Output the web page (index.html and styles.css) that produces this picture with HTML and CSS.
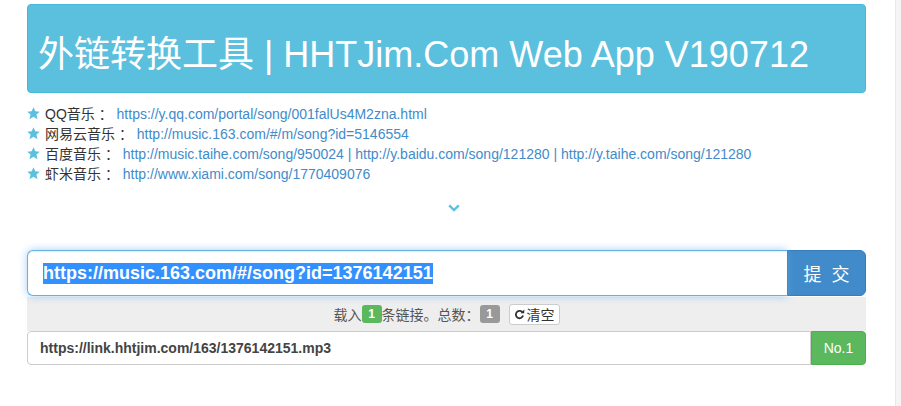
FILE: index.html
```html
<!DOCTYPE html>
<html lang="zh-CN">
<head>
<meta charset="utf-8">
<title>外链转换工具</title>
<link rel="stylesheet" href="styles.css">
</head>
<body>
<div class="page">
  <div class="header">
    <h1 class="title">外链转换工具 | HHTJim.Com Web App V190712</h1>
  </div>
  <ul class="sources">
    <li><svg class="star" viewBox="0 0 12 12"><path d="M6 0.2 7.7 4 11.8 4.3 8.7 7 9.7 11.2 6 9 2.3 11.2 3.3 7 0.2 4.3 4.3 4Z"/></svg>QQ音乐 ： <a href="#">https://y.qq.com/portal/song/001falUs4M2zna.html</a></li>
    <li><svg class="star" viewBox="0 0 12 12"><path d="M6 0.2 7.7 4 11.8 4.3 8.7 7 9.7 11.2 6 9 2.3 11.2 3.3 7 0.2 4.3 4.3 4Z"/></svg>网易云音乐 ： <a href="#">http://music.163.com/#/m/song?id=5146554</a></li>
    <li><svg class="star" viewBox="0 0 12 12"><path d="M6 0.2 7.7 4 11.8 4.3 8.7 7 9.7 11.2 6 9 2.3 11.2 3.3 7 0.2 4.3 4.3 4Z"/></svg>百度音乐 ： <a href="#">http://music.taihe.com/song/950024</a> <span class="sep">|</span> <a href="#">http://y.baidu.com/song/121280</a> <span class="sep">|</span> <a href="#">http://y.taihe.com/song/121280</a></li>
    <li><svg class="star" viewBox="0 0 12 12"><path d="M6 0.2 7.7 4 11.8 4.3 8.7 7 9.7 11.2 6 9 2.3 11.2 3.3 7 0.2 4.3 4.3 4Z"/></svg>虾米音乐 ： <a href="#">http://www.xiami.com/song/1770409076</a></li>
  </ul>
  <div class="more">
    <svg class="chev" viewBox="0 0 12 8"><path d="M1.2 1.4 6 6 10.8 1.4" fill="none" stroke="#5bc0de" stroke-width="2.4"/></svg>
  </div>
  <div class="input-group">
    <div class="url-input"><span class="sel">https://music.163.com/#/song?id=1376142151</span></div>
    <button class="submit">提 交</button>
  </div>
  <div class="status">
    <span>载入</span><span class="badge green">1</span><span>条链接。总数：</span><span class="badge gray">1</span>
    <button class="clear"><svg class="refresh" viewBox="0 0 12 12"><path d="M9.6 4.2A4 4 0 1 0 9.9 7.2" fill="none" stroke="#333" stroke-width="2"/><path d="M7.2 4.6 11.2 4.6 11.2 0.6Z" fill="#333"/></svg>清空</button>
  </div>
  <div class="result">
    <div class="result-input">https://link.hhtjim.com/163/1376142151.mp3</div>
    <button class="no">No.1</button>
  </div>
</div>
<div class="scrollbar"></div>
</body>
</html>
```

FILE: styles.css
```css
html, body {
  margin: 0;
  padding: 0;
  background: #fff;
}
body {
  font-family: "Liberation Sans", Arial, "Noto Sans CJK SC", sans-serif;
  font-size: 14px;
  color: #333;
}
.page {
  width: 839px;
  margin-left: 27px;
  padding-top: 4px;
}
.header {
  background: #5bc0de;
  border: 1px solid #46b8da;
  border-radius: 4px;
  height: 87px;
  display: flex;
  align-items: center;
}
.title {
  margin: 0 0 0 10px;
  color: #fff;
  font-weight: normal;
  font-size: 36px;
  line-height: 40px;
  padding-top: 12px;
  font-family: "Liberation Sans", Arial, "Noto Sans CJK SC", sans-serif;
}
.sources {
  list-style: none;
  margin: 11px 0 0 0;
  padding: 0;
}
.sources li {
  display: block;
  height: 20px;
  line-height: 20px;
  white-space: pre;
}
.star {
  display: inline-block;
  width: 13px;
  height: 13px;
  fill: #5bc0de;
  margin-right: 5px;
  vertical-align: -1px;
}
.sources a {
  color: #428bca;
  text-decoration: none;
}
.sep { color: #428bca; }
.more {
  height: 44px;
  display: flex;
  justify-content: center;
  padding-top: 20px;
  box-sizing: border-box;
}
.chev {
  width: 12px;
  height: 8px;
  margin-left: 15px;
}
.input-group {
  margin-top: 22px;
  display: flex;
  height: 46px;
}
.url-input {
  flex: 1;
  border: 1px solid #66afe9;
  border-right: none;
  border-radius: 6px 0 0 6px;
  box-shadow: inset 0 1px 1px rgba(0,0,0,.075), 0 0 8px rgba(102,175,233,.6);
  display: flex;
  align-items: center;
  padding-left: 15px;
  font-size: 18px;
  font-weight: bold;
  color: #fff;
  position: relative;
  z-index: 1;
  background: #fff;
}
.sel {
  background: #3390ff;
  color: #fff;
  line-height: 21px;
}
.submit {
  width: 79px;
  border: 1px solid #357ebd;
  background: #428bca;
  color: #fff;
  font-size: 18px;
  letter-spacing: 3px;
  padding: 0 0 0 3px;
  border-radius: 0 6px 6px 0;
  font-family: "Noto Sans CJK SC", sans-serif;
}
.status {
  margin-top: 1px;
  background: #eee;
  height: 34px;
  display: flex;
  align-items: center;
  justify-content: center;
  color: #555;
  font-family: "Noto Sans CJK SC", sans-serif;
  font-size: 14px;
}
.badge {
  display: inline-block;
  min-width: 20px;
  height: 18px;
  line-height: 18px;
  border-radius: 3px;
  color: #fff;
  font-weight: bold;
  font-size: 12px;
  text-align: center;
  font-family: "Liberation Sans", Arial, sans-serif;
}
.badge.green { background: #5cb85c; }
.badge.gray { background: #999; }
.clear {
  margin-left: 9px;
  height: 21px;
  padding: 0 4px;
  background: #fff;
  border: 1px solid #ccc;
  border-radius: 3px;
  font-family: "Noto Sans CJK SC", sans-serif;
  font-size: 14px;
  color: #333;
  display: flex;
  align-items: center;
  gap: 2px;
}
.refresh {
  width: 11px;
  height: 11px;
}
.result {
  display: flex;
  height: 34px;
}
.result-input {
  flex: 1;
  border: 1px solid #ccc;
  border-radius: 4px 0 0 4px;
  display: flex;
  align-items: center;
  padding-left: 12px;
  font-weight: bold;
  font-size: 14px;
  color: #444;
}
.no {
  width: 55px;
  background: #5cb85c;
  border: 1px solid #4cae4c;
  border-radius: 0 4px 4px 0;
  color: #fff;
  font-size: 14px;
  font-family: "Liberation Sans", Arial, sans-serif;
  padding: 0;
}
.scrollbar {
  position: fixed;
  top: 0;
  right: 0;
  width: 5px;
  height: 100%;
  background: #f5f5f5;
  border-left: 1px solid #e8e8e8;
}
```
